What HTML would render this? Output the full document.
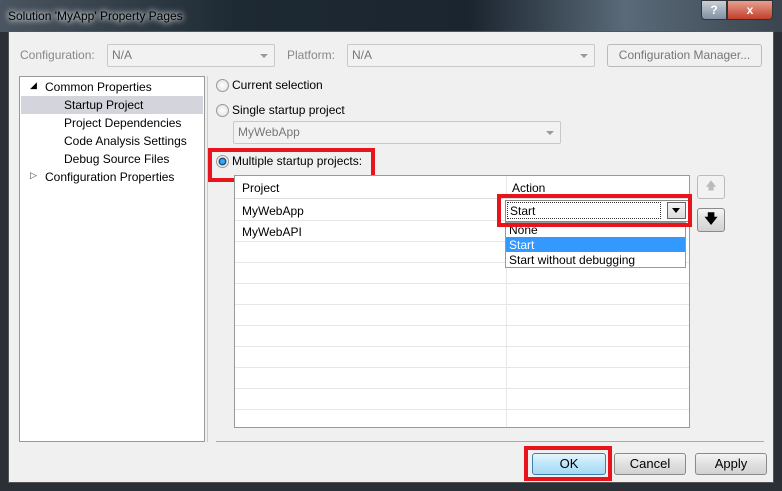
<!DOCTYPE html><html><head><style>
*{margin:0;padding:0;box-sizing:border-box}
body{width:782px;height:491px;overflow:hidden;background:#2a3036;font-family:"Liberation Sans",sans-serif;font-size:12px;color:#000;position:relative}
.a{position:absolute}
.title{left:0;top:0;width:782px;height:32px;background:linear-gradient(90deg,#4a5560 0%,#1d2933 30%,#1b2530 60%,#5a6a78 80%,#3a4550 100%)}
.client{left:8px;top:31px;width:766px;height:452px;background:#f0f0f0;border:1px solid #555}
.combo{border:1px solid #c8c8c8;border-radius:2px;background:#f2f2f2;color:#777;padding:3px 4px;height:23px}
.combo:after{content:"";position:absolute;right:6px;top:9px;border:4px solid transparent;border-top:4px solid #999}
.btn{border:1px solid #8a8a8a;border-radius:3px;background:linear-gradient(#f4f4f4,#e0e0e0 50%,#d2d2d2);text-align:center;line-height:20px;font-size:13px}
.radio{width:13px;height:13px;border-radius:50%;border:1px solid #999;background:radial-gradient(#fff,#ddd)}
.red{border:4px solid #e8141c}
.t{white-space:nowrap}
.row{border-bottom:1px solid #e6e6e6}
</style></head><body>
<div class="a title"></div>
<div class="a t" style="left:8px;top:9px;color:#000;font-size:12px;text-shadow:0 0 8px #fff,0 0 6px #fff">Solution 'MyApp' Property Pages</div>
<div class="a" style="left:701px;top:0;width:26px;height:20px;border:1px solid #333;border-radius:0 0 0 4px;background:linear-gradient(#c8d0d8,#8090a0);color:#fff;text-align:center;font-weight:bold;line-height:18px">?</div>
<div class="a" style="left:727px;top:0;width:46px;height:20px;border:1px solid #333;border-radius:0 0 4px 0;background:linear-gradient(#e8a090,#c0402c);color:#fff;text-align:center;font-weight:bold;line-height:18px">x</div>
<div class="a client"></div>
<div class="a t" style="left:20px;top:48px;color:#888">Configuration:</div>
<div class="a combo" style="left:107px;top:44px;width:168px">N/A</div>
<div class="a t" style="left:287px;top:48px;color:#888">Platform:</div>
<div class="a combo" style="left:347px;top:44px;width:248px">N/A</div>
<div class="a btn" style="left:607px;top:44px;width:155px;height:23px;color:#777;border-color:#bbb;background:#f0f0f0;font-size:12px">Configuration Manager...</div>
<div class="a" style="left:19px;top:76px;width:186px;height:366px;background:#fff;border:1px solid #999"></div>
<div class="a" style="left:21px;top:96px;width:182px;height:18px;background:#d4d4dc"></div>
<div class="a t" style="left:30px;top:80px;font-size:9px">◢</div>
<div class="a t" style="left:45px;top:80px">Common Properties</div>
<div class="a t" style="left:64px;top:98px">Startup Project</div>
<div class="a t" style="left:64px;top:116px">Project Dependencies</div>
<div class="a t" style="left:64px;top:134px">Code Analysis Settings</div>
<div class="a t" style="left:64px;top:152px">Debug Source Files</div>
<div class="a t" style="left:30px;top:170px;font-size:9px;color:#444">▷</div>
<div class="a t" style="left:45px;top:170px">Configuration Properties</div>
<div class="a" style="left:207px;top:76px;width:1px;height:366px;background:#ccc"></div>
<div class="a" style="left:216px;top:441px;width:548px;height:1px;background:#aaa"></div>
<div class="a radio" style="left:216px;top:79px"></div>
<div class="a t" style="left:232px;top:78px">Current selection</div>
<div class="a radio" style="left:216px;top:104px"></div>
<div class="a t" style="left:232px;top:103px">Single startup project</div>
<div class="a combo" style="left:233px;top:121px;width:328px">MyWebApp</div>
<div class="a radio" style="left:216px;top:155px;background:radial-gradient(#3af 25%,#135 45%,#eee 55%)"></div>
<div class="a t" style="left:232px;top:154px">Multiple startup projects:</div>
<div class="a red" style="left:208px;top:148px;width:167px;height:34px"></div>
<div class="a" style="left:234px;top:175px;width:456px;height:253px;background:#fff;border:1px solid #999">
<div class="a" style="left:0;top:0;width:454px;height:23px;border-bottom:1px solid #ddd"></div>
<div class="a" style="left:271px;top:0;width:1px;height:251px;background:#e6e6e6"></div>
<div class="a t" style="left:7px;top:5px">Project</div>
<div class="a t" style="left:277px;top:5px">Action</div>
<div class="a t" style="left:7px;top:28px">MyWebApp</div>
<div class="a t" style="left:7px;top:49px">MyWebAPI</div>
<div class="a" style="left:0;top:44px;width:271px;height:1px;background:#e6e6e6"></div>
<div class="a" style="left:0;top:65px;width:271px;height:1px;background:#e6e6e6"></div>
<div class="a" style="left:0;top:86px;width:454px;height:1px;background:#e6e6e6"></div>
<div class="a" style="left:0;top:107px;width:454px;height:1px;background:#e6e6e6"></div>
<div class="a" style="left:0;top:128px;width:454px;height:1px;background:#e6e6e6"></div>
<div class="a" style="left:0;top:149px;width:454px;height:1px;background:#e6e6e6"></div>
<div class="a" style="left:0;top:170px;width:454px;height:1px;background:#e6e6e6"></div>
<div class="a" style="left:0;top:191px;width:454px;height:1px;background:#e6e6e6"></div>
<div class="a" style="left:0;top:212px;width:454px;height:1px;background:#e6e6e6"></div>
<div class="a" style="left:0;top:233px;width:454px;height:1px;background:#e6e6e6"></div>
</div>
<div class="a" style="left:505px;top:200px;width:184px;height:22px;border:1px solid #888;background:#fff"></div>
<div class="a" style="left:507px;top:202px;width:154px;height:17px;border:1px dotted #333"></div>
<div class="a t" style="left:510px;top:204px">Start</div>
<div class="a" style="left:667px;top:202px;width:19px;height:17px;border:1px solid #666;background:linear-gradient(#f4f4f4,#ddd)"></div>
<div class="a" style="left:672px;top:208px;border:4px solid transparent;border-top:5px solid #000"></div>
<div class="a" style="left:505px;top:222px;width:181px;height:46px;border:1px solid #999;background:#fff"></div>
<div class="a" style="left:506px;top:237px;width:179px;height:15px;background:#3399ff"></div>
<div class="a t" style="left:509px;top:223px">None</div>
<div class="a t" style="left:509px;top:238px;color:#fff">Start</div>
<div class="a t" style="left:509px;top:253px">Start without debugging</div>
<div class="a red" style="left:497px;top:194px;width:195px;height:33px"></div>
<div class="a btn" style="left:697px;top:175px;width:28px;height:24px;border-color:#bbb;background:#f2f2f2;color:#bbb;font-size:11px">🡅</div>
<div class="a btn" style="left:697px;top:208px;width:28px;height:24px;font-size:13px;font-weight:bold">🡇</div>
<div class="a btn" style="left:532px;top:453px;width:74px;height:22px;border-color:#3c7fb1;background:linear-gradient(#e6f5fc,#bde6fb 50%,#a8d8f4)">OK</div>
<div class="a red" style="left:524px;top:446px;width:88px;height:35px"></div>
<div class="a btn" style="left:614px;top:453px;width:72px;height:22px">Cancel</div>
<div class="a btn" style="left:695px;top:453px;width:72px;height:22px">Apply</div>
</body></html>
